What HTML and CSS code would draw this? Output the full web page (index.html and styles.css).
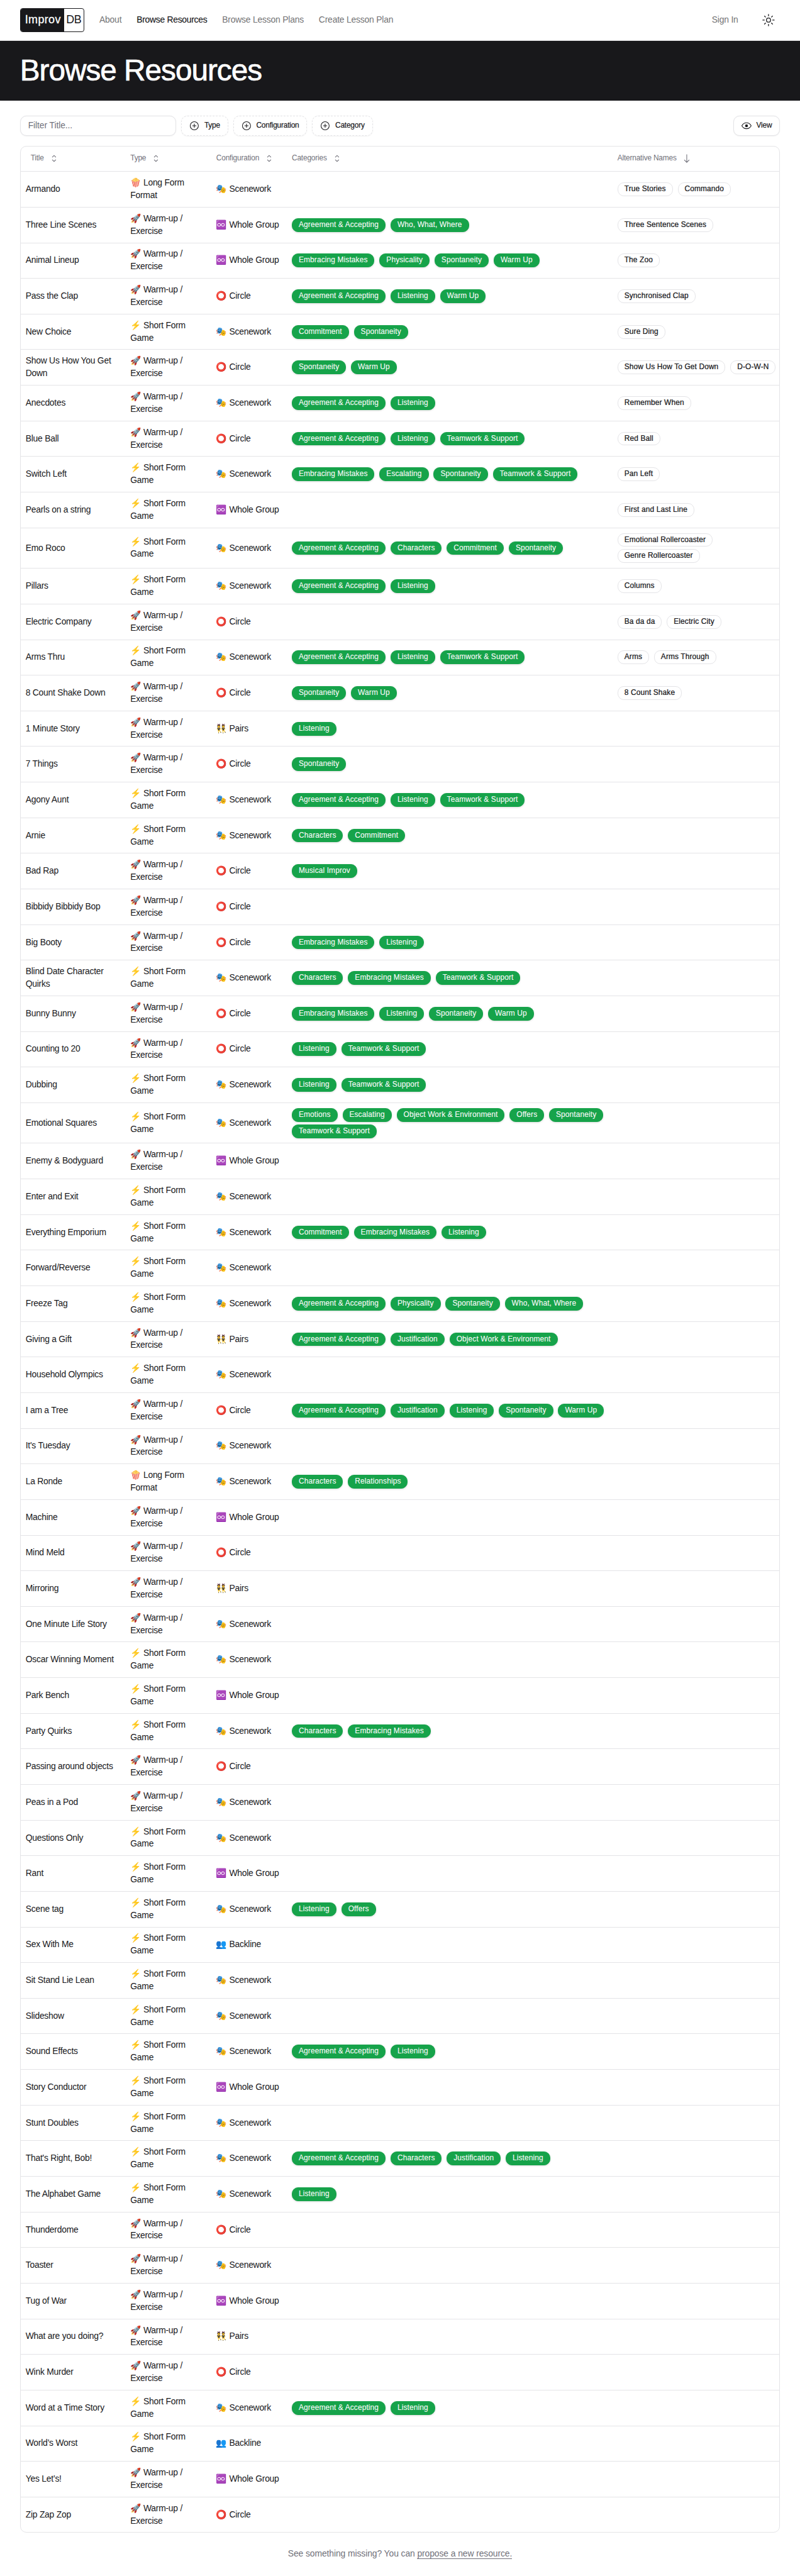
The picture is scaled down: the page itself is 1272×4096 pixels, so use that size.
FILE: index.html
```html
<!DOCTYPE html>
<html lang="en">
<head>
<meta charset="utf-8">
<title>Browse Resources - ImprovDB</title>
<link rel="stylesheet" href="styles.css">
</head>
<body>
<header class="topbar">
  <a class="logo"><span class="logo-main">Improv</span><span class="logo-db">DB</span></a>
  <nav class="nav">
    <a>About</a>
    <a class="active">Browse Resources</a>
    <a>Browse Lesson Plans</a>
    <a>Create Lesson Plan</a>
  </nav>
  <a class="signin">Sign In</a>
  <button class="theme" aria-label="Toggle theme">
    <svg width="20" height="20" viewBox="0 0 20 20" fill="none" stroke="currentColor" stroke-width="1.3" stroke-linecap="round"><circle cx="10" cy="10" r="3.3"/><path d="M10 .9v2.4M10 16.7v2.4M.9 10h2.4M16.7 10h2.4M3.6 3.6l1.6 1.6M14.8 14.8l1.6 1.6M3.6 16.4l1.6-1.6M14.8 5.2l1.6-1.6"/></svg>
  </button>
</header>
<section class="hero"><h1>Browse Resources</h1></section>
<main>
  <div class="toolbar">
    <input class="filter" placeholder="Filter Title...">
    <button class="btn dashed"><svg class="icon" viewBox="0 0 15 15"><circle cx="7.5" cy="7.5" r="6.1"/><path d="M7.5 4.5v6M4.5 7.5h6"/></svg>Type</button>
    <button class="btn dashed"><svg class="icon" viewBox="0 0 15 15"><circle cx="7.5" cy="7.5" r="6.1"/><path d="M7.5 4.5v6M4.5 7.5h6"/></svg>Configuration</button>
    <button class="btn dashed"><svg class="icon" viewBox="0 0 15 15"><circle cx="7.5" cy="7.5" r="6.1"/><path d="M7.5 4.5v6M4.5 7.5h6"/></svg>Category</button>
    <button class="btn view"><svg class="icon" viewBox="0 0 15 15"><path d="M.5 7.5C2 4.700 4.500 3.100 7.500 3.100s5.500 1.600 7 4.400c-1.500 2.800-4 4.400-7 4.400S2 10.300.5 7.500z"/><circle class="pupil" cx="7.500" cy="7.500" r="2.100"/></svg>View</button>
  </div>
  <div class="table">
    <div class="row head" id="head"></div>
    <div id="rows"></div>
  </div>
</main>
<footer>See something missing? You can <a>propose a new resource.</a></footer>
<script src="rows.js"></script>
</body>
</html>
```
FILE: styles.css
```css
* { box-sizing: border-box; }
html { zoom: 0.99375; }
body {
  margin: 0;
  width: 1280px;
  background: #fff;
  color: #18181b;
  font: 14px/20px "Liberation Sans", Arial, "Noto Color Emoji", sans-serif;
}
button, input { font: inherit; color: inherit; margin: 0; background: #fff; }
.topbar {
  display: flex;
  align-items: center;
  height: 65px;
  padding: 0 32px;
  border-bottom: 1px solid #e4e4e7;
}
.logo {
  display: flex;
  width: 103px;
  height: 38px;
  margin-right: 24px;
  border: 1px solid #18181b;
  border-radius: 4px;
  overflow: hidden;
  font-size: 18px;
  line-height: 36px;
}
.logo-main {
  width: 70px;
  padding-left: 7px;
  background: #18181b;
  color: #fff;
  letter-spacing: 0.4px;
  -webkit-text-stroke: 0.3px;
}
.logo-db { padding-left: 3px; letter-spacing: -0.6px; }
.nav { display: flex; gap: 24px; flex: 1; color: #747476; letter-spacing: -0.21px; }
.nav .active { color: #18181b; letter-spacing: -0.28px; -webkit-text-stroke: 0.15px; }
.signin { color: #747476; margin-right: 31px; letter-spacing: -0.2px; }
.theme {
  display: flex;
  align-items: center;
  justify-content: center;
  width: 36px;
  height: 36px;
  padding: 0;
  border: 0;
}
.hero {
  height: 96px;
  padding: 24px 32px;
  background: #18181b;
  color: #fff;
  box-shadow: 0 1px 3px rgba(0, 0, 0, 0.15);
}
h1 {
  margin: 0;
  font-size: 48px;
  line-height: 48px;
  font-weight: 400;
  letter-spacing: -1px;
  -webkit-text-stroke: 0.7px;
}
main { padding: 24px 32px 0; }
.toolbar { display: flex; gap: 8px; height: 32px; margin-bottom: 16px; }
.filter {
  width: 250px;
  padding: 0 12px;
  border: 1px solid #e4e4e7;
  border-radius: 10px;
  box-shadow: 0 1px 2px rgba(0, 0, 0, 0.06);
}
.filter::placeholder { color: #71717a; letter-spacing: -0.1px; }
.btn {
  display: flex;
  align-items: center;
  gap: 8px;
  padding: 0 12px;
  border: 1px solid #e4e4e7;
  border-radius: 10px;
  box-shadow: 0 1px 2px rgba(0, 0, 0, 0.06);
  font-size: 12px;
  letter-spacing: -0.22px;
  white-space: nowrap;
  -webkit-text-stroke: 0.2px;
}
.dashed { border-style: dashed; }
.view { margin-left: auto; }
.icon { width: 16px; height: 16px; flex: none; fill: none; stroke: currentColor; stroke-width: 1; }
.icon .pupil { fill: currentColor; stroke: none; }
.table { border: 1px solid #e4e4e7; border-radius: 10px; }
.row {
  display: grid;
  grid-template-columns: 167.6px 137.4px 121px 521px 1fr;
  align-items: center;
  border-bottom: 1px solid #e4e4e7;
}
#rows .row { min-height: 57px; }
#rows .row:last-child { min-height: 56px; border-bottom: 0; }
.cell { padding: 8px; letter-spacing: -0.26px; }
.type { padding-right: 36px; }
.head { height: 41px; color: #71717a; font-size: 12px; }
.head .cell { display: flex; align-items: center; gap: 8px; padding: 0 8px; letter-spacing: -0.2px; }
.head .cell:first-child { padding-left: 16px; }
.tags { display: flex; flex-wrap: wrap; gap: 4px 8px; padding-right: 0; }
.tag {
  padding: 2px 10px;
  border: 1px solid #e4e4e7;
  border-radius: 10px;
  font-size: 12px;
  line-height: 16px;
  letter-spacing: 0.13px;
  white-space: nowrap;
  -webkit-text-stroke: 0.25px;
}
.green {
  border-color: #16a34a;
  background: #16a34a;
  color: #fafafa;
  box-shadow: 0 1px 3px rgba(0, 0, 0, 0.15);
  -webkit-text-stroke: 0.1px;
}
footer { padding: 24px 0; text-align: center; color: #71717a; letter-spacing: -0.1px; }
footer a { border-bottom: 1px solid #71717a; }
```
FILE: rows.js
```js
const types = { W: "🚀 Warm-up / Exercise", S: "⚡ Short Form Game", L: "🍿 Long Form Format" };
const configs = { S: "🎭 Scenework", W: "♾️ Whole Group", C: "⭕ Circle", P: "👯 Pairs", B: "👥 Backline" };
const cats = {
  A: "Agreement & Accepting", W: "Who, What, Where", M: "Embracing Mistakes", P: "Physicality",
  S: "Spontaneity", U: "Warm Up", L: "Listening", C: "Commitment", T: "Teamwork & Support",
  E: "Escalating", H: "Characters", I: "Musical Improv", O: "Object Work & Environment",
  F: "Offers", N: "Emotions", J: "Justification", R: "Relationships"
};

// title | type + configuration | category keys | alternative names
const data = `Armando|LS||True Stories;Commando
Three Line Scenes|WW|AW|Three Sentence Scenes
Animal Lineup|WW|MPSU|The Zoo
Pass the Clap|WC|ALU|Synchronised Clap
New Choice|SS|CS|Sure Ding
Show Us How You Get Down|WC|SU|Show Us How To Get Down;D-O-W-N
Anecdotes|WS|AL|Remember When
Blue Ball|WC|ALT|Red Ball
Switch Left|SS|MEST|Pan Left
Pearls on a string|SW||First and Last Line
Emo Roco|SS|AHCS|Emotional Rollercoaster;Genre Rollercoaster
Pillars|SS|AL|Columns
Electric Company|WC||Ba da da;Electric City
Arms Thru|SS|ALT|Arms;Arms Through
8 Count Shake Down|WC|SU|8 Count Shake
1 Minute Story|WP|L
7 Things|WC|S
Agony Aunt|SS|ALT
Arnie|SS|HC
Bad Rap|WC|I
Bibbidy Bibbidy Bop|WC|
Big Booty|WC|ML
Blind Date Character Quirks|SS|HMT
Bunny Bunny|WC|MLSU
Counting to 20|WC|LT
Dubbing|SS|LT
Emotional Squares|SS|NEOFST
Enemy & Bodyguard|WW|
Enter and Exit|SS|
Everything Emporium|SS|CML
Forward/Reverse|SS|
Freeze Tag|SS|APSW
Giving a Gift|WP|AJO
Household Olympics|SS|
I am a Tree|WC|AJLSU
It's Tuesday|WS|
La Ronde|LS|HR
Machine|WW|
Mind Meld|WC|
Mirroring|WP|
One Minute Life Story|WS|
Oscar Winning Moment|SS|
Park Bench|SW|
Party Quirks|SS|HM
Passing around objects|WC|
Peas in a Pod|WS|
Questions Only|SS|
Rant|SW|
Scene tag|SS|LF
Sex With Me|SB|
Sit Stand Lie Lean|SS|
Slideshow|SS|
Sound Effects|SS|AL
Story Conductor|SW|
Stunt Doubles|SS|
That's Right, Bob!|SS|AHJL
The Alphabet Game|SS|L
Thunderdome|WC|
Toaster|WS|
Tug of War|WW|
What are you doing?|WP|
Wink Murder|WC|
Word at a Time Story|SS|AL
World’s Worst|SB|
Yes Let’s!|WW|
Zip Zap Zop|WC|`;

const sort = '<svg class="icon" viewBox="0 0 15 15"><path d="M4.700 5.700 7.500 3 10.300 5.700M4.700 9.300 7.500 12 10.300 9.300"/></svg>';
const down = '<svg class="icon" viewBox="0 0 15 15"><path d="M7.500 1.500v12M3.700 9.500l3.800 3.900 3.800-3.900"/></svg>';
document.getElementById("head").innerHTML =
  ["Title", "Type", "Configuration", "Categories", "Alternative Names"]
    .map((name, i) => `<div class="cell">${name}${i === 4 ? down : sort}</div>`).join("");

const tags = (names, cls) =>
  `<div class="cell tags">${names.map(n => `<span class="tag ${cls}">${n.replace("&", "&amp;")}</span>`).join("")}</div>`;

document.getElementById("rows").innerHTML = data.split("\n").map(line => {
  const [title, kind, keys, alt] = line.split("|");
  return `<div class="row"><div class="cell">${title.replace("&", "&amp;")}</div>` +
    `<div class="cell type">${types[kind[0]]}</div><div class="cell">${configs[kind[1]]}</div>` +
    tags([...keys].map(k => cats[k]), "green") + tags(alt ? alt.split(";") : [], "") + "</div>";
}).join("");
```
